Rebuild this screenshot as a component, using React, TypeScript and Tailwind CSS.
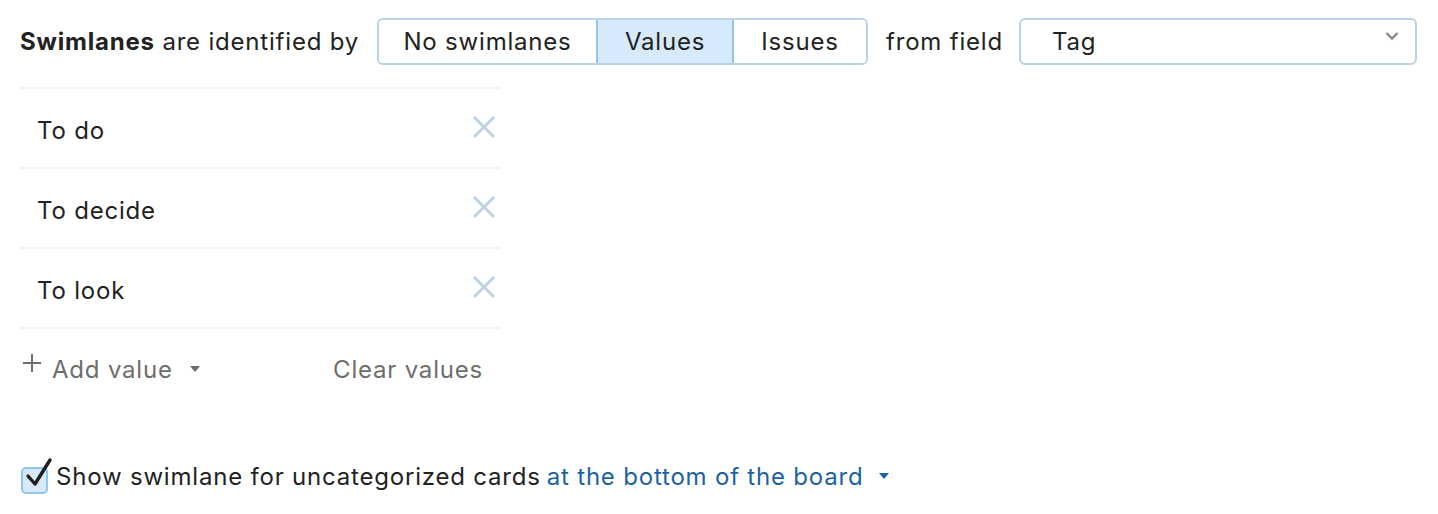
import React from "react";

const values = ["To do", "To decide", "To look"];

function CloseIcon() {
  return (
    <svg width="24" height="24" viewBox="0 0 24 24" className="text-[#b9d0e6]">
      <path d="M2 2 L22 22 M22 2 L2 22" stroke="currentColor" strokeWidth="2.6" fill="none" />
    </svg>
  );
}

export default function App() {
  return (
    <div className="w-[1438px] h-[514px] bg-white text-[#222] text-[24px] tracking-[0.8px] font-['Inter',sans-serif] px-[20px] pt-[18px]">
      <div className="flex items-center h-[47px]">
        <span className="whitespace-nowrap">
          <b className="font-bold">Swimlanes</b> are identified by
        </span>
        <div className="ml-[18px] flex h-[47px] rounded-[6px] border-2 border-[#bcd2e8] overflow-hidden">
          <button className="w-[217px] h-full bg-white tracking-[0.8px]">No swimlanes</button>
          <button className="w-[138px] h-full bg-[#d6eafc] border-x-2 border-[#8fc4f4] tracking-[0.8px]">Values</button>
          <button className="w-[132px] h-full bg-white tracking-[0.8px]">Issues</button>
        </div>
        <span className="ml-[18px] whitespace-nowrap">from field</span>
        <div className="ml-[16px] relative flex items-center w-[398px] h-[47px] rounded-[6px] border-2 border-[#bcd2e8] pl-[31px]">
          <span>Tag</span>
          <svg width="14" height="10" viewBox="0 0 14 10" className="absolute right-[16px] top-[11px] text-[#8a8a8a]">
            <path d="M1.5 2 L7 7.5 L12.5 2" stroke="currentColor" strokeWidth="2.4" fill="none" />
          </svg>
        </div>
      </div>

      <div className="w-[480px] mt-[22px] border-t-2 border-[#f3f3f3]">
        {values.map((v) => (
          <div key={v} className="flex items-center justify-between h-[80px] border-b-2 border-[#f3f3f3] pl-[17px] pr-[4px]">
            <span className="pt-[6px]">{v}</span>
            <span className="mb-[2px]">
              <CloseIcon />
            </span>
          </div>
        ))}
        <div className="flex items-center justify-between h-[82px] text-[#6e6e6e] pr-[17px]">
          <div className="flex items-center">
            <svg width="20" height="20" viewBox="0 0 20 20" className="ml-[2px] mb-[14px]">
              <path d="M10 1 V19 M1 10 H19" stroke="#6e6e6e" strokeWidth="2" fill="none" />
            </svg>
            <span className="ml-[10px]">Add value</span>
            <svg width="12" height="8" viewBox="0 0 12 8" className="ml-[16px] mb-[2px]">
              <path d="M1 1 L11 1 L6 7 Z" fill="#6e6e6e" />
            </svg>
          </div>
          <span>Clear values</span>
        </div>
      </div>

      <div className="flex items-center mt-[46px] h-[40px]">
        <span className="relative w-[27px] h-[27px] rounded-[5px] border-2 border-[#8fc4f4] bg-[#d6eafc] ml-[1px] mt-[6px]">
          <svg width="30" height="34" viewBox="0 0 30 34" className="absolute left-[1px] top-[-13px]">
            <path d="M4 20 L11 28 L26 4" stroke="#1f1f1f" strokeWidth="3.4" fill="none" strokeLinecap="round" strokeLinejoin="round" />
          </svg>
        </span>
        <span className="ml-[8px] whitespace-nowrap">Show swimlane for uncategorized cards</span>
        <span className="ml-[6px] whitespace-nowrap text-[#1b62a3]">at the bottom of the board</span>
        <svg width="12" height="8" viewBox="0 0 12 8" className="ml-[15px] mb-[2px]">
          <path d="M1 1 L11 1 L6 7 Z" fill="#1b62a3" />
        </svg>
      </div>
    </div>
  );
}
